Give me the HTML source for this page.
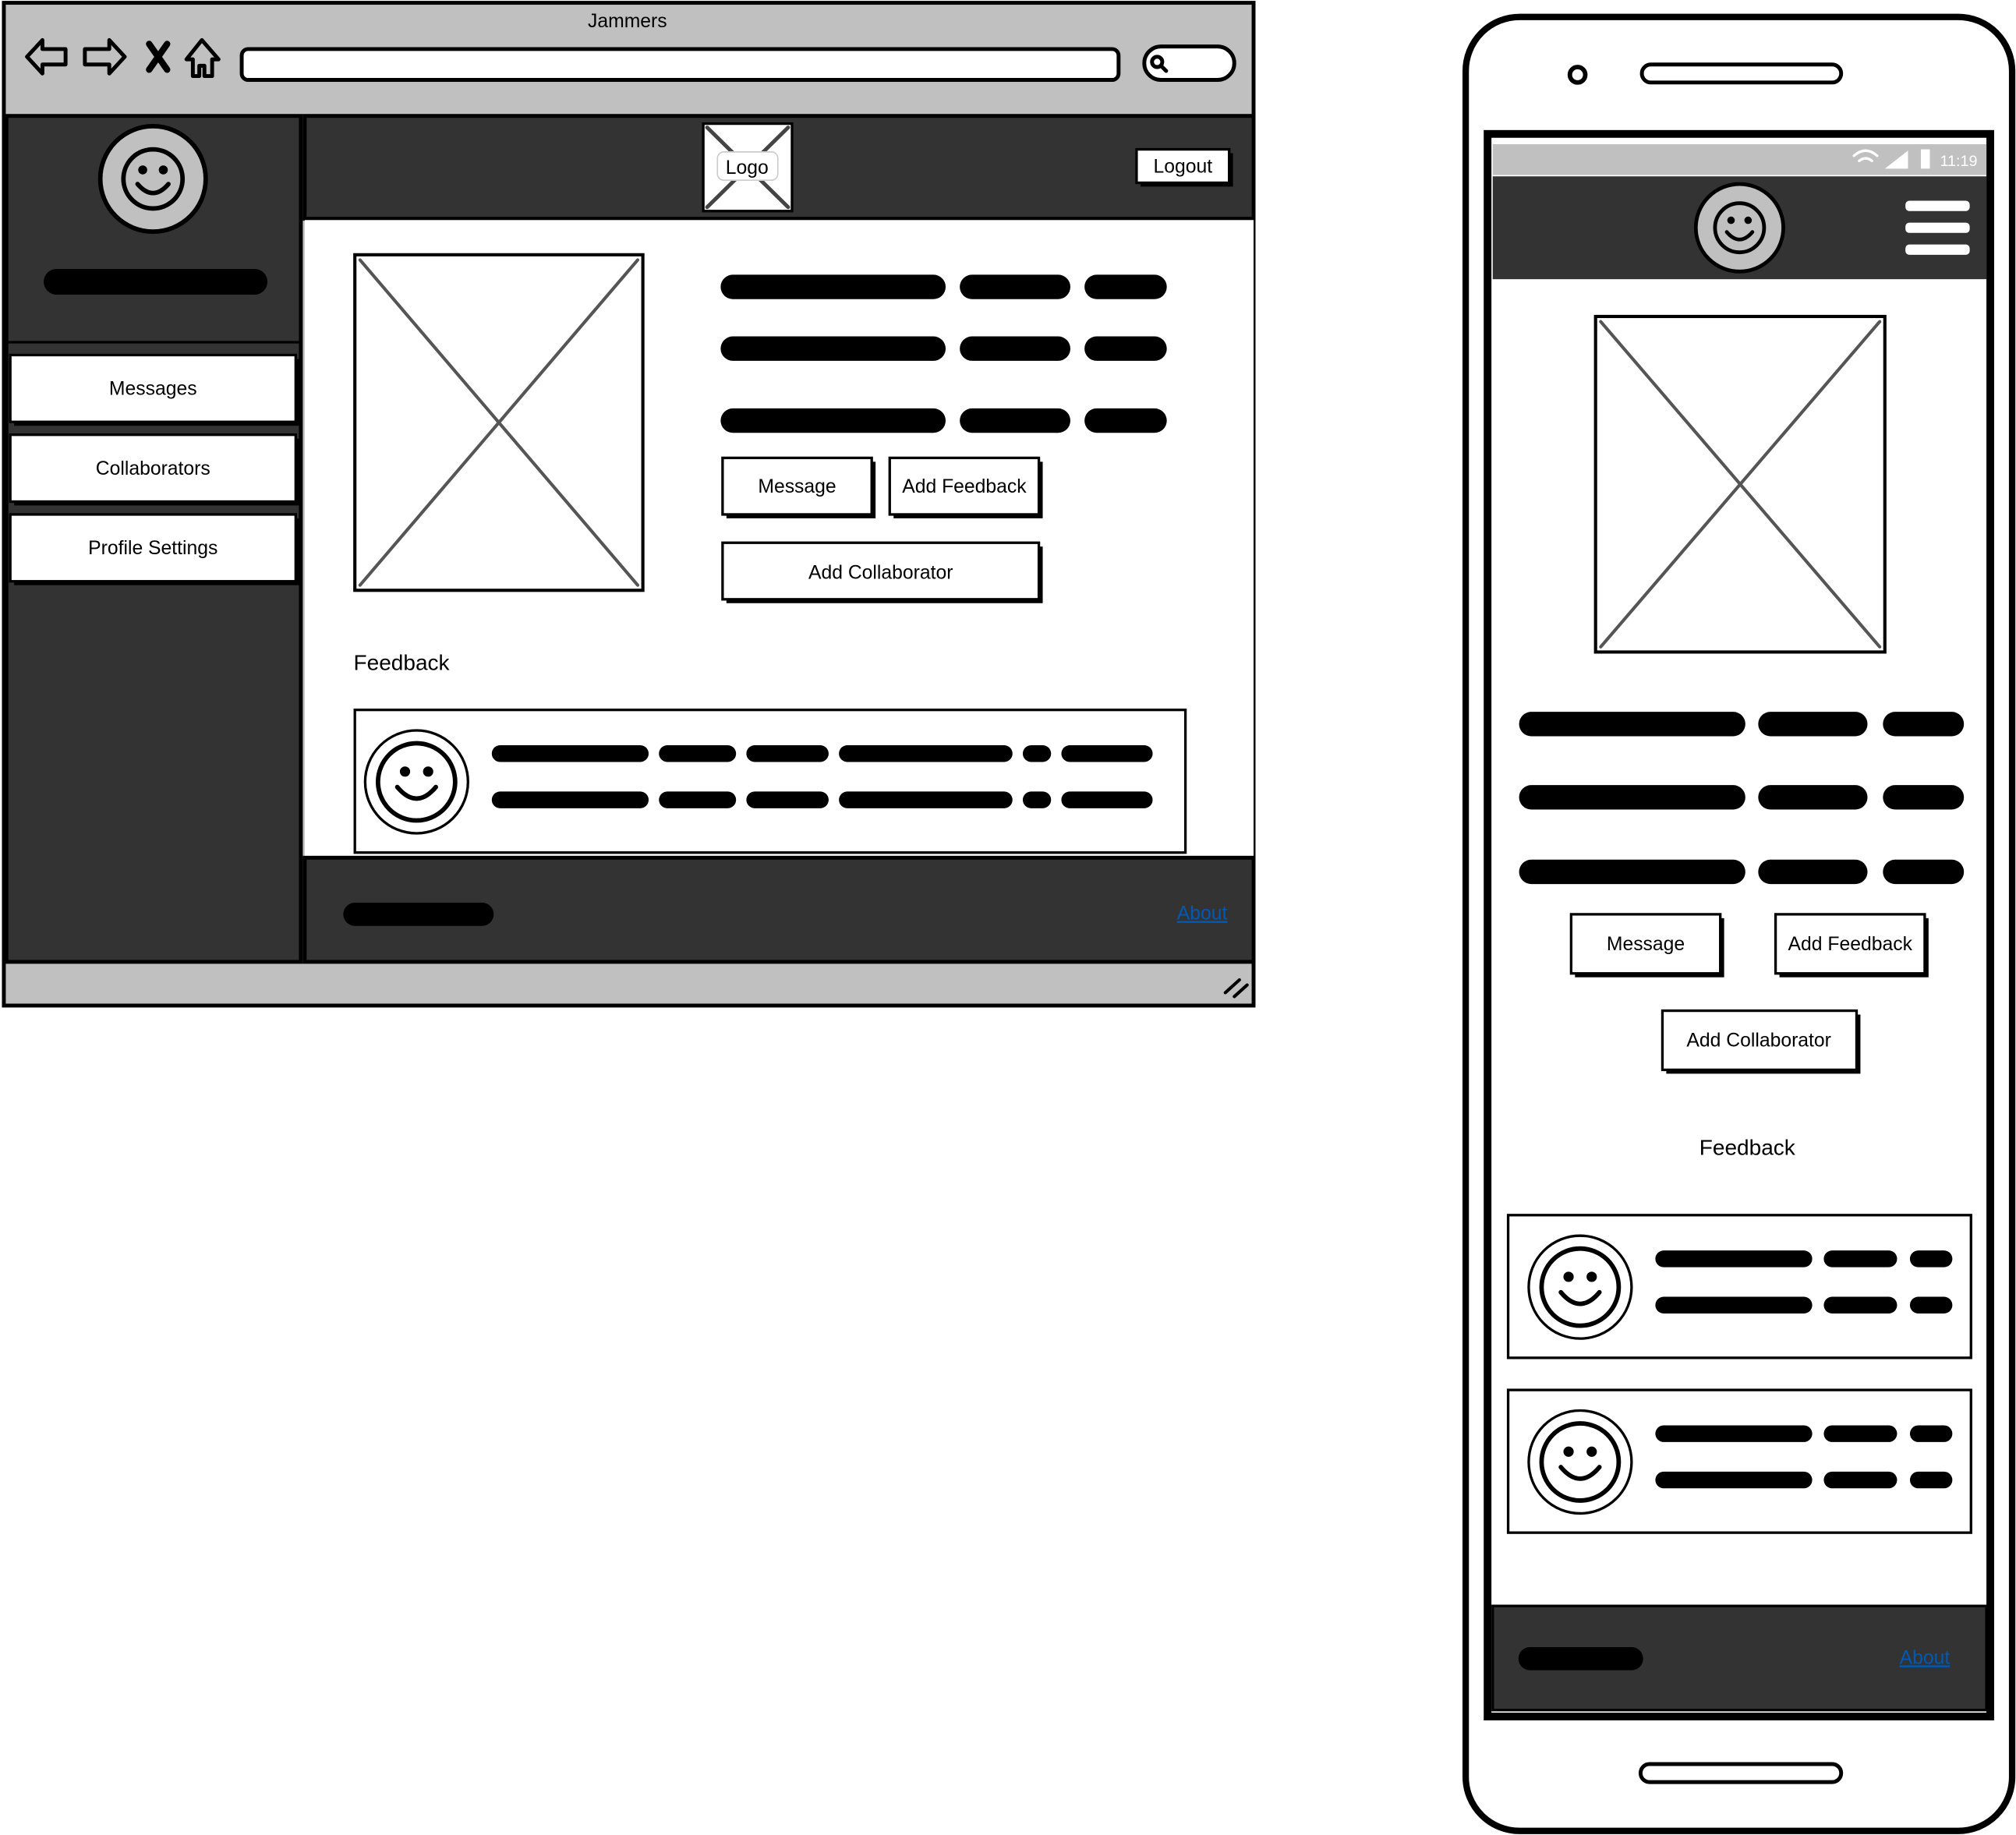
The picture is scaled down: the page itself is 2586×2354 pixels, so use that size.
<!DOCTYPE html>
<html><head><meta charset="utf-8"><style>
html,body{margin:0;padding:0;background:#fff;}
svg{display:block;}
text{font-family:"Liberation Sans",sans-serif;}
</style></head><body>
<svg width="2586" height="2354" viewBox="0 0 1568 1427" xmlns="http://www.w3.org/2000/svg">
<defs>
<g id="smile">
  <circle cx="0" cy="0" r="40" fill="#fff" stroke="#000" stroke-width="2"/>
  <circle cx="0" cy="0" r="30" fill="none" stroke="#000" stroke-width="3.5"/>
  <circle cx="-9" cy="-8" r="4"/><circle cx="9" cy="-8" r="4"/>
  <path d="M-15,4 Q0,22 15,4" fill="none" stroke="#000" stroke-width="3.5" stroke-linecap="round"/>
</g>
<g id="smileg">
  <circle cx="0" cy="0" r="41" fill="#c0c0c0" stroke="#000" stroke-width="3.5"/>
  <circle cx="0" cy="0" r="23" fill="none" stroke="#000" stroke-width="3.5"/>
  <circle cx="-8" cy="-7" r="3.5"/><circle cx="8" cy="-7" r="3.5"/>
  <path d="M-12,4 Q0,18 12,4" fill="none" stroke="#000" stroke-width="3.5" stroke-linecap="round"/>
</g>
</defs>
<g stroke-linecap="round">
<!-- Browser -->
<rect x="3" y="2" width="972" height="780" fill="#c0c0c0" stroke="#000" stroke-width="3"/>
<text x="488" y="21" font-size="15" text-anchor="middle">Jammers</text>
<g fill="none" stroke="#000" stroke-width="3" stroke-linejoin="round">
  <path d="M21,44 L33,31 L33,38 L51,38 L51,50 L33,50 L33,57 Z"/>
  <path d="M97,44 L85,31 L85,38 L66,38 L66,50 L85,50 L85,57 Z"/>
  <path d="M116,34 L130,54 M130,34 L116,54" stroke-width="5"/>
  <path d="M145,46 L157,31 L170,46 L165,46 L165,59 L159,59 L159,51 L155,51 L155,59 L150,59 L150,46 Z"/>
  <rect x="188" y="38" width="682" height="24" rx="5" fill="#fff"/>
  <rect x="890" y="36" width="70" height="26" rx="13" fill="#fff"/>
  <circle cx="900" cy="48" r="4"/><path d="M903,51 L907,55"/>
</g>
<rect x="5" y="90" width="229" height="658" fill="#333" stroke="#000" stroke-width="3"/>
<use href="#smileg" x="119" y="139"/>
<line x1="44" y1="219" x2="198" y2="219" stroke="#000" stroke-width="20"/>
<line x1="7" y1="266" x2="232" y2="266" stroke="#000" stroke-width="2"/>
<g font-size="15" text-anchor="middle">
  <rect x="11" y="279" width="222" height="52" fill="#000"/><rect x="8" y="276" width="222" height="52" fill="#fff" stroke="#000" stroke-width="2"/><text x="119" y="307">Messages</text>
  <rect x="11" y="341" width="222" height="52" fill="#000"/><rect x="8" y="338" width="222" height="52" fill="#fff" stroke="#000" stroke-width="2"/><text x="119" y="369">Collaborators</text>
  <rect x="11" y="403" width="222" height="52" fill="#000"/><rect x="8" y="400" width="222" height="52" fill="#fff" stroke="#000" stroke-width="2"/><text x="119" y="431">Profile Settings</text>
</g>
<rect x="237" y="90" width="738" height="80" fill="#333" stroke="#000" stroke-width="3"/>
<rect x="547" y="96" width="69" height="68" fill="#fff" stroke="#000" stroke-width="2"/>
<path d="M550,99 L613,161 M613,99 L550,161" stroke="#444" stroke-width="3"/>
<rect x="558" y="118" width="47" height="22" rx="5" fill="#fff" stroke="#ccc"/>
<text x="581" y="135" font-size="15" text-anchor="middle">Logo</text>
<rect x="887" y="119" width="72" height="26" fill="#000"/>
<rect x="884" y="116" width="72" height="26" fill="#fff" stroke="#000" stroke-width="2"/>
<text x="920" y="134" font-size="15" text-anchor="middle">Logout</text>
<rect x="237" y="171" width="738" height="496" fill="#fff"/>
<rect x="276" y="198" width="224" height="261" fill="#fff" stroke="#000" stroke-width="2.5"/>
<path d="M280,202 L496,455 M496,202 L280,455" stroke="#555" stroke-width="2.5"/>
<g stroke="#000" stroke-width="19">
  <line x1="570" y1="223" x2="726" y2="223"/><line x1="756" y1="223" x2="823" y2="223"/><line x1="853" y1="223" x2="898" y2="223"/>
  <line x1="570" y1="271" x2="726" y2="271"/><line x1="756" y1="271" x2="823" y2="271"/><line x1="853" y1="271" x2="898" y2="271"/>
  <line x1="570" y1="327" x2="726" y2="327"/><line x1="756" y1="327" x2="823" y2="327"/><line x1="853" y1="327" x2="898" y2="327"/>
</g>
<g font-size="15" text-anchor="middle">
  <rect x="565" y="359" width="116" height="44" fill="#000"/><rect x="562" y="356" width="116" height="44" fill="#fff" stroke="#000" stroke-width="2"/><text x="620" y="383">Message</text>
  <rect x="695" y="359" width="116" height="44" fill="#000"/><rect x="692" y="356" width="116" height="44" fill="#fff" stroke="#000" stroke-width="2"/><text x="750" y="383">Add Feedback</text>
  <rect x="565" y="425" width="246" height="44" fill="#000"/><rect x="562" y="422" width="246" height="44" fill="#fff" stroke="#000" stroke-width="2"/><text x="685" y="450">Add Collaborator</text>
</g>
<text x="275" y="521" font-size="17">Feedback</text>
<rect x="276" y="552" width="646" height="111" fill="#fff" stroke="#000" stroke-width="2"/>
<use href="#smile" x="324" y="608"/>
<g stroke="#000" stroke-width="13">
  <line x1="389" y1="586" x2="498" y2="586"/><line x1="519" y1="586" x2="566" y2="586"/><line x1="587" y1="586" x2="638" y2="586"/><line x1="659" y1="586" x2="781" y2="586"/><line x1="802" y1="586" x2="811" y2="586"/><line x1="832" y1="586" x2="890" y2="586"/>
  <line x1="389" y1="622" x2="498" y2="622"/><line x1="519" y1="622" x2="566" y2="622"/><line x1="587" y1="622" x2="638" y2="622"/><line x1="659" y1="622" x2="781" y2="622"/><line x1="802" y1="622" x2="811" y2="622"/><line x1="832" y1="622" x2="890" y2="622"/>
</g>
<rect x="237" y="667" width="738" height="81" fill="#333" stroke="#000" stroke-width="3"/>
<line x1="276" y1="711" x2="375" y2="711" stroke="#000" stroke-width="18"/>
<text x="935" y="715" font-size="15" text-anchor="middle" fill="#0059b3" text-decoration="underline">About</text>
<path d="M953,772 L964,762 M960,775 L970,766" stroke="#000" stroke-width="2.5"/>

<!-- Phone -->
<rect x="1140" y="13" width="425" height="1411" rx="42" fill="#fff" stroke="#000" stroke-width="5"/>
<circle cx="1227" cy="58" r="6" fill="none" stroke="#000" stroke-width="3.5"/>
<rect x="1277" y="50" width="155" height="14" rx="7" fill="#fff" stroke="#000" stroke-width="3"/>
<rect x="1276" y="1372" width="156" height="14" rx="7" fill="#fff" stroke="#000" stroke-width="3"/>
<rect x="1157" y="104" width="391" height="1231" fill="#fff" stroke="#000" stroke-width="6"/>
<rect x="1161" y="112" width="384" height="24" fill="#c0c0c0"/>
<text x="1538" y="129" font-size="12" text-anchor="end" fill="#fff">11:19</text>
<rect x="1494" y="116" width="7" height="15" fill="#fff"/>
<path d="M1466,131 L1484,131 L1484,117 Z" fill="#fff"/>
<path d="M1442,121 Q1451,113 1460,121 M1446,125 Q1451,121 1456,125" stroke="#fff" stroke-width="2" fill="none"/>
<rect x="1161" y="137" width="384" height="80" fill="#333"/>
<use href="#smileg" transform="translate(1353,177) scale(0.83)"/>
<g fill="#fff"><rect x="1482" y="156" width="50" height="8" rx="3"/><rect x="1482" y="173" width="50" height="8" rx="3"/><rect x="1482" y="190" width="50" height="8" rx="3"/></g>
<rect x="1241" y="246" width="225" height="261" fill="#fff" stroke="#000" stroke-width="2.5"/>
<path d="M1245,250 L1462,503 M1462,250 L1245,503" stroke="#555" stroke-width="2.5"/>
<g stroke="#000" stroke-width="19">
  <line x1="1191" y1="563" x2="1348" y2="563"/><line x1="1377" y1="563" x2="1443" y2="563"/><line x1="1474" y1="563" x2="1518" y2="563"/>
  <line x1="1191" y1="620" x2="1348" y2="620"/><line x1="1377" y1="620" x2="1443" y2="620"/><line x1="1474" y1="620" x2="1518" y2="620"/>
  <line x1="1191" y1="678" x2="1348" y2="678"/><line x1="1377" y1="678" x2="1443" y2="678"/><line x1="1474" y1="678" x2="1518" y2="678"/>
</g>
<g font-size="15" text-anchor="middle">
  <rect x="1225" y="714" width="116" height="46" fill="#000"/><rect x="1222" y="711" width="116" height="46" fill="#fff" stroke="#000" stroke-width="2"/><text x="1280" y="739">Message</text>
  <rect x="1384" y="714" width="116" height="46" fill="#000"/><rect x="1381" y="711" width="116" height="46" fill="#fff" stroke="#000" stroke-width="2"/><text x="1439" y="739">Add Feedback</text>
  <rect x="1296" y="789" width="151" height="46" fill="#000"/><rect x="1293" y="786" width="151" height="46" fill="#fff" stroke="#000" stroke-width="2"/><text x="1368" y="814">Add Collaborator</text>
</g>
<text x="1359" y="898" font-size="17" text-anchor="middle">Feedback</text>
<rect x="1173" y="945" width="360" height="111" fill="#fff" stroke="#000" stroke-width="2"/>
<use href="#smile" x="1229" y="1001"/>
<rect x="1173" y="1081" width="360" height="111" fill="#fff" stroke="#000" stroke-width="2"/>
<use href="#smile" x="1229" y="1137"/>
<g stroke="#000" stroke-width="13">
  <line x1="1294" y1="979" x2="1403" y2="979"/><line x1="1425" y1="979" x2="1469" y2="979"/><line x1="1492" y1="979" x2="1512" y2="979"/>
  <line x1="1294" y1="1015" x2="1403" y2="1015"/><line x1="1425" y1="1015" x2="1469" y2="1015"/><line x1="1492" y1="1015" x2="1512" y2="1015"/>
  <line x1="1294" y1="1115" x2="1403" y2="1115"/><line x1="1425" y1="1115" x2="1469" y2="1115"/><line x1="1492" y1="1115" x2="1512" y2="1115"/>
  <line x1="1294" y1="1151" x2="1403" y2="1151"/><line x1="1425" y1="1151" x2="1469" y2="1151"/><line x1="1492" y1="1151" x2="1512" y2="1151"/>
</g>
<rect x="1161" y="1249" width="384" height="81" fill="#333" stroke="#000" stroke-width="2"/>
<line x1="1190" y1="1290" x2="1269" y2="1290" stroke="#000" stroke-width="18"/>
<text x="1497" y="1294" font-size="15" text-anchor="middle" fill="#0059b3" text-decoration="underline">About</text>
</g>
</svg>
</body></html>
